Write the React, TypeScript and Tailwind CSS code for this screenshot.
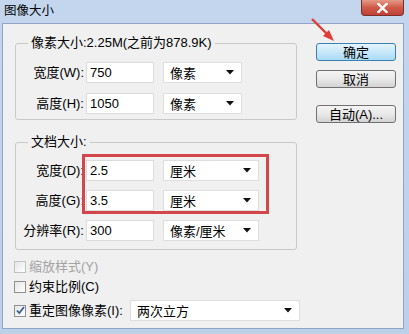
import type { ReactNode } from "react";

const font = { fontFamily: '"Liberation Sans", "Noto Sans CJK SC", sans-serif' };

function Field({ label, value }: { label: string; value: string }) {
  return (
    <div className="flex h-[21px] items-center">
      <span className="w-[68px] shrink-0 text-right">{label}</span>
      <div className="ml-[2px] flex h-full w-[68px] items-center border border-[#dcdcdc] bg-white pl-[3px]">
        {value}
      </div>
    </div>
  );
}

function Select({ value, width }: { value: string; width: string }) {
  return (
    <div className={`flex h-[21px] shrink-0 items-center justify-between border border-[#dedede] bg-white pl-[6px] pr-[7px] ${width}`}>
      <span className="pt-[2px]">{value}</span>
      <svg width="8" height="5" viewBox="0 0 8 5">
        <path d="M0 0h8L4 4.5z" fill="#111" />
      </svg>
    </div>
  );
}

function Group({ legend, children, className }: { legend: string; children: ReactNode; className?: string }) {
  return (
    <fieldset className={`rounded-[3px] border border-[#c9c9c9] ${className ?? ""}`}>
      <legend className="ml-[12px] px-[3px] leading-[18px]">{legend}</legend>
      {children}
    </fieldset>
  );
}

function Check({ checked, disabled, label }: { checked?: boolean; disabled?: boolean; label: string }) {
  return (
    <div className={`flex shrink-0 items-center whitespace-nowrap leading-[17px] ${disabled ? "text-[#a3a3a3]" : ""}`}>
      <span
        className={`flex size-[12px] items-center justify-center border bg-gradient-to-br from-[#e6e6e6] to-white ${
          disabled ? "border-[#c2c2c2]" : "border-[#8e8f8f]"
        }`}
      >
        {checked && (
          <svg width="9" height="9" viewBox="0 0 9 9">
            <path d="M1 4.5l2.3 2.6L8 1" fill="none" stroke="#3a5f97" strokeWidth="1.8" />
          </svg>
        )}
      </span>
      <span className="ml-[3px]">{label}</span>
    </div>
  );
}

function Button({ label, primary }: { label: string; primary?: boolean }) {
  return (
    <div
      className={`flex h-[18px] w-[80px] items-center justify-center rounded-[3px] border leading-none ${
        primary
          ? "border-[#3c7fb1] bg-gradient-to-b from-[#e5f4fc] to-[#a9dbf6]"
          : "border-[#707070] bg-gradient-to-b from-[#f4f4f4] via-[#e9e9e9] to-[#d3d3d3]"
      }`}
    >
      {label}
    </div>
  );
}

export default function App() {
  return (
    <div
      className="relative flex h-[334px] w-[409px] flex-col overflow-hidden bg-gradient-to-b from-[#c3d6ee] to-[#bcd0e9] text-[13px] text-black"
      style={font}
    >
      {/* title bar */}
      <div className="flex h-[23px] shrink-0 items-start justify-between">
        <span className="pl-[4px] pt-[2px] text-[12.5px]">图像大小</span>
        <div className="mr-[5px] flex h-[16px] w-[43px] items-center justify-center rounded-b-[4px] border border-t-0 border-[#7a3028] bg-gradient-to-b from-[#e59a88] via-[#cf5a48] to-[#c2413a]">
          <svg width="11" height="10" viewBox="0 0 11 10">
            <path d="M1.5 1l8 8M9.5 1l-8 8" stroke="#fff" strokeWidth="2.4" strokeLinecap="square" />
          </svg>
        </div>
      </div>

      {/* client area */}
      <div className="ml-[2px] mr-[5px] flex min-h-0 flex-1 border border-[#8da5c6] bg-[#f0f0f0] pl-[12px]">
        <div className="flex w-[282px] shrink-0 flex-col">
          <Group legend="像素大小:2.25M(之前为878.9K)" className="mt-[10px] pb-[5px] pt-[10px]">
            <div className="flex flex-col gap-[10px]">
              <div className="flex items-center gap-[9px]">
                <Field label="宽度(W):" value="750" />
                <Select value="像素" width="w-[79px]" />
              </div>
              <div className="flex items-center gap-[9px]">
                <Field label="高度(H):" value="1050" />
                <Select value="像素" width="w-[79px]" />
              </div>
            </div>
          </Group>

          <Group legend="文档大小:" className="mt-[13px] pb-[8px] pt-[9px]">
            <div className="flex flex-col gap-[9px]">
              <div className="flex items-center gap-[9px]">
                <Field label="宽度(D):" value="2.5" />
                <Select value="厘米" width="w-[96px]" />
              </div>
              <div className="flex items-center gap-[9px]">
                <Field label="高度(G):" value="3.5" />
                <Select value="厘米" width="w-[96px]" />
              </div>
              <div className="flex items-center gap-[9px]">
                <Field label="分辨率(R):" value="300" />
                <Select value="像素/厘米" width="w-[96px]" />
              </div>
            </div>
          </Group>

          <div className="ml-[-1px] mt-[8px] flex flex-col">
            <Check disabled label="缩放样式(Y)" />
            <div className="mt-[3px]">
              <Check label="约束比例(C)" />
            </div>
            <div className="mt-[5px] flex w-max items-center">
              <Check checked label="重定图像像素(I):" />
              <div className="ml-[7px]">
                <Select value="两次立方" width="w-[170px]" />
              </div>
            </div>
          </div>
        </div>

        <div className="ml-[19px] flex flex-col pt-[19px]">
          <Button primary label="确定" />
          <div className="mt-[9px]">
            <Button label="取消" />
          </div>
          <div className="mt-[17px]">
            <Button label="自动(A)..." />
          </div>
        </div>
      </div>
      <div className="h-[5px] shrink-0" />

      {/* red highlight box */}
      <div className="pointer-events-none absolute left-[82px] top-[154px] h-[60px] w-[187px] border-[3px] border-[#d2474a]" />

      {/* red arrow */}
      <svg className="pointer-events-none absolute left-[308px] top-[14px]" width="32" height="32" viewBox="0 0 32 32">
        <path d="M4 5L22 23" stroke="#df3d36" strokeWidth="2.4" />
        <path d="M26 27L15 22L21 16z" fill="#df3d36" />
      </svg>
    </div>
  );
}
